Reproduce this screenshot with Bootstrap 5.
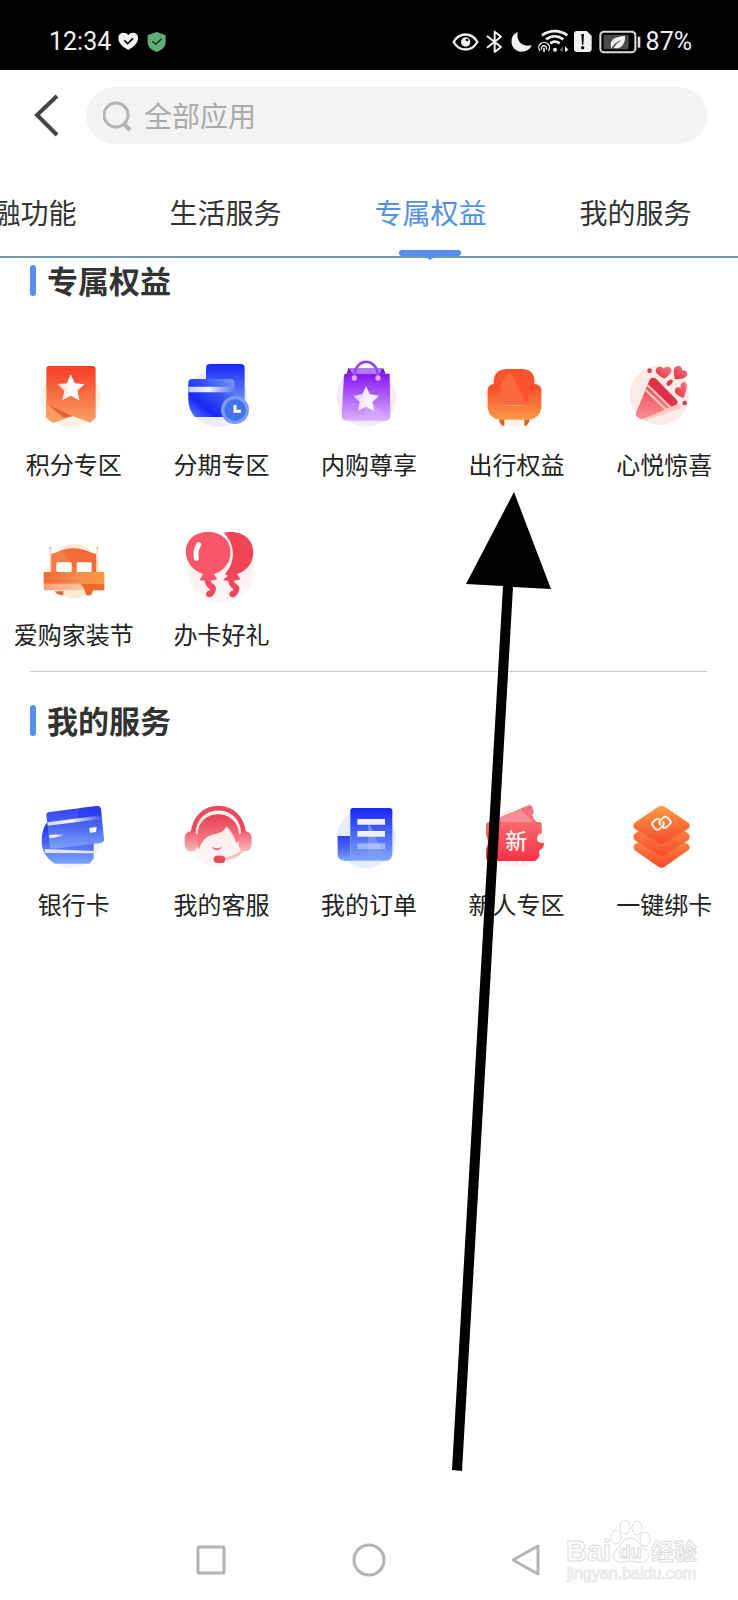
<!DOCTYPE html>
<html lang="zh-CN">
<head>
<meta charset="utf-8">
<meta name="viewport" content="width=device-width, initial-scale=1">
<title>全部应用</title>
<link href="https://cdn.jsdelivr.net/npm/bootstrap@5.3.0/dist/css/bootstrap.min.css" rel="stylesheet">
<style>
body{font-family:"Noto Sans CJK SC",sans-serif;color:#222;background:#fff}
.phone{min-height:100vh}
.status-bar{height:70px;background:#000;color:#f2f2f2;font:400 25px/28px Roboto,sans-serif;padding:28px 46px 0 49px}
.status-bar .signals{gap:2px}
.search-row{padding:17px 31px 0 30px}
.back-btn{width:56px;height:57px}
.search-pill{height:57px;background:#f3f3f3;padding-left:17px}
.search-pill input{font-size:28px;line-height:40px;margin-left:12px;padding:0 0 2px;color:#333}
.search-pill input::placeholder{color:#aaa;opacity:1}
.tab-strip{height:114px;border-bottom:2px solid #6d9bb5}
.tab-item{flex:0 0 205px;height:112px;padding-top:24px;font-size:28px;color:#333}
.tab-item.active{color:#5192e0}
.tab-item.active::before{content:"";position:absolute;bottom:0;left:50%;width:62px;height:6px;margin-left:-32px;border-radius:3px;background:#568fee}
.tab-item.active::after{content:"";position:absolute;top:100%;left:50%;margin-left:-7px;border:6px solid transparent;border-top:4px solid #568fee;border-bottom:0}
.section-title{font-size:31px;line-height:44px;font-weight:700;color:#333;padding-left:30px;margin-bottom:52px}
.section-title::before{content:"";width:6px;height:31px;border-radius:3px;background:#568fee;margin-right:11px}
.app-grid{display:grid;grid-template-columns:repeat(5,1fr);row-gap:42px}
.app-item{font-size:24px;line-height:36px;color:#222;gap:12px;white-space:nowrap}
.app-item svg{width:80px;height:80px}
.divider{height:1px;background:#ccc;margin:19px 31px 26px 30px}
.sys-nav{height:80px}
.sys-nav button{width:158px;height:80px}
.pointer{top:0;left:0;width:100%;pointer-events:none}
.watermark{right:36px;bottom:12px;width:140px;height:70px;pointer-events:none;font-family:"Liberation Sans","Noto Sans CJK SC",sans-serif}
</style>
</head>
<body>
<svg width="0" height="0" class="position-absolute" aria-hidden="true">
  <defs>
    <linearGradient id="gOrange" x2="0" y2="1"><stop stop-color="#f53c25"/><stop offset="1" stop-color="#fba065"/></linearGradient>
    <linearGradient id="gSofa" x2="0" y2="1"><stop stop-color="#f8482a"/><stop offset="1" stop-color="#fb9a48"/></linearGradient>
    <linearGradient id="gBlue" x2="0" y2="1"><stop stop-color="#1827f5"/><stop offset="1" stop-color="#7fa6f8"/></linearGradient>
    <linearGradient id="gCard" x2="0" y2="1"><stop stop-color="#3340ee"/><stop offset=".5" stop-color="#4a69f2"/><stop offset="1" stop-color="#7ea3f8"/></linearGradient>
    <linearGradient id="gBlue2" x1="1" x2="0" y2="1"><stop stop-color="#7a9af8"/><stop offset=".4" stop-color="#3550f3"/><stop offset=".7" stop-color="#1626f4"/><stop offset="1" stop-color="#5d86f6"/></linearGradient>
    <linearGradient id="gPurple" x2="0" y2="1"><stop stop-color="#8516f3"/><stop offset="1" stop-color="#d9b0fb"/></linearGradient>
    <linearGradient id="gRed" x2="0" y2="1"><stop stop-color="#e93d55"/><stop offset="1" stop-color="#fa8f92"/></linearGradient>
    <linearGradient id="gPad" x2="0" y2="1"><stop stop-color="#f25e6e"/><stop offset="1" stop-color="#fcb9bb"/></linearGradient>
    <linearGradient id="gTicket" x2="0" y2="1"><stop stop-color="#f56c6f"/><stop offset="1" stop-color="#fb3046"/></linearGradient>
    <linearGradient id="gHeart" x1="1" x2="0" y2="1"><stop stop-color="#f77a86"/><stop offset="1" stop-color="#de2f46"/></linearGradient>
    <linearGradient id="gStripe"><stop stop-color="#fff" stop-opacity=".75"/><stop offset=".45" stop-color="#fff" stop-opacity=".95"/><stop offset="1" stop-color="#fff" stop-opacity="0"/></linearGradient>
    <linearGradient id="gStar"><stop stop-color="#fff" stop-opacity=".7"/><stop offset=".5" stop-color="#fff"/></linearGradient>
    <linearGradient id="gBed"><stop stop-color="#ee6a35"/><stop offset=".55" stop-color="#f58b4e"/><stop offset="1" stop-color="#fb9a3a"/></linearGradient>
    <linearGradient id="gBedLow"><stop stop-color="#fa9d72"/><stop offset="1" stop-color="#fde0d2"/></linearGradient>
    <linearGradient id="gLayer" x2="0" y2="1"><stop stop-color="#fc9a45"/><stop offset="1" stop-color="#f74a2c"/></linearGradient>
    <linearGradient id="gFade" x2="0" y2="1"><stop stop-color="#fff" stop-opacity=".35"/><stop offset="1" stop-color="#fff" stop-opacity="0"/></linearGradient>
    <linearGradient id="gGlow" x2="0" y2="1"><stop stop-color="#fdeae8"/><stop offset="1" stop-color="#fff6f4"/></linearGradient>
  </defs>
</svg>

<div class="phone position-relative d-flex flex-column overflow-hidden">
  <div class="status-bar d-flex justify-content-between">
    <div class="d-flex">
      <span>12:34</span>
      <svg class="ms-1" width="50" height="28" viewBox="346 84 150 84" overflow="visible" aria-hidden="true">
        <path d="M386 150C365 139 356 127 356 114C356 98 377 93 386 106C395 93 415 98 415 114C415 127 406 139 386 150Z" fill="#f2f2f2"/>
        <path d="M374 121L384 131L400 115" fill="none" stroke="#000" stroke-width="5"/>
        <path d="M471 96L498 106V126C498 141 487 150 471 156C455 150 444 141 444 126V106Z" fill="#5fae78"/>
        <path d="M458 124L468 133L486 116" fill="none" stroke="#0b3016" stroke-width="4"/>
      </svg>
    </div>
    <div class="signals d-flex">
      <svg width="193" height="28" viewBox="243 84 579 84" fill="none" stroke="#f2f2f2" stroke-width="7" aria-hidden="true">
        <path d="M251 126C268 96 305 96 322 126C305 156 268 156 251 126Z"/>
        <circle cx="287" cy="126" r="14" fill="#f2f2f2" stroke="none"/><circle cx="291" cy="120" r="4" fill="#000" stroke="none"/>
        <path d="M351 108L393 141L374 156V95L393 110L351 143" stroke-width="6" stroke-linejoin="round"/>
        <path d="M443 96C415 105 419 155 455 155C471 155 481 147 485 136C458 143 438 124 443 96Z" fill="#f2f2f2" stroke="none"/>
        <path d="M516 106C538 89 570 89 592 106M528 118C544 106 564 106 580 118M541 130C550 123 560 123 569 130" stroke-width="8"/>
        <circle cx="555" cy="149" r="6" fill="#f2f2f2" stroke="none"/>
        <g stroke="#000" stroke-width="10"><path d="M510 153A15 15 0 1 1 534 153"/></g>
        <path d="M510 153A16 16 0 1 1 535 153M515 149A8 8 0 1 1 529 149" stroke-width="4"/><path d="M522 143V156" stroke-width="5"/>
        <path d="M579 140V156L569 149Z" fill="#666" stroke="none"/><path d="M585 138L595 149L585 156Z" fill="#f2f2f2" stroke="none"/>
        <path d="M620 93H650L665 107V147Q665 156 656 156H621Q612 156 612 147V102Q612 93 620 93Z" fill="#f2f2f2" stroke="none"/>
        <path d="M634 102H642L640 134H636Z" fill="#000" stroke="none"/><circle cx="638" cy="143" r="5" fill="#000" stroke="none"/>
        <rect x="691" y="95" width="105" height="62" rx="11" stroke="#ddd" stroke-width="6"/>
        <rect x="701" y="104" width="75" height="44" rx="4" fill="#4a4a4a" stroke="none"/>
        <path d="M724 146C716 118 735 110 765 108C767 136 748 150 731 143Q740 130 754 120Q733 128 724 146Z" fill="#f2f2f2" stroke="none"/>
        <path d="M807 110V143" stroke-width="8" stroke="#ddd"/>
      </svg>
      <span>87%</span>
    </div>
  </div>

  <header>
    <form class="search-row d-flex" role="search">
      <button type="button" class="back-btn btn border-0 p-0 text-start" aria-label="返回">
        <svg class="d-block" width="32" height="57" viewBox="0 0 32 57" fill="none" stroke="#444" stroke-width="4"><path d="M27 9L7 28L27 48"/></svg>
      </button>
      <label class="search-pill rounded-pill d-flex align-items-center flex-grow-1">
        <svg class="flex-shrink-0" width="29" height="32" viewBox="0 0 29 32" fill="none" stroke="#b4b4b4" stroke-width="3"><circle cx="13" cy="15" r="12"/><path d="M20 23L27 30" stroke-width="4"/></svg>
        <input type="search" class="form-control border-0 bg-transparent shadow-none" placeholder="全部应用" aria-label="全部应用">
      </label>
    </form>
    <nav class="tab-strip d-flex justify-content-end" aria-label="分类">
      <a href="#" class="tab-item d-flex align-items-center justify-content-center text-decoration-none">金融功能</a>
      <a href="#" class="tab-item d-flex align-items-center justify-content-center text-decoration-none">生活服务</a>
      <a href="#benefits" class="tab-item active position-relative d-flex align-items-center justify-content-center text-decoration-none" aria-current="true">专属权益</a>
      <a href="#services" class="tab-item d-flex align-items-center justify-content-center text-decoration-none">我的服务</a>
    </nav>
  </header>

  <main>
    <section id="benefits">
      <h2 class="section-title d-flex align-items-center mt-0">专属权益</h2>
      <div class="app-grid">
        <a href="#" class="app-item d-flex flex-column align-items-center text-decoration-none">
          <svg viewBox="101 42 240 240" aria-hidden="true">
            <circle cx="212" cy="173" r="89" fill="#fdf1e4"/>
            <path d="M148 78H276Q286 78 286 88V233L270 248L216 228L158 248L138 233V88Q138 78 148 78Z" fill="url(#gOrange)"/>
            <path d="M138 189L216 228L158 248L138 233Z" fill="#fb9c66"/><path d="M140 191L216 228L190 233Z" fill="#e7602f"/>
            <path d="M211 103L223 130L252 133L231 152L237 181L211 167L186 181L192 152L171 133L200 130Z" fill="url(#gStar)"/>
          </svg>积分专区</a>
        <a href="#" class="app-item d-flex flex-column align-items-center text-decoration-none">
          <svg viewBox="544 42 240 240" aria-hidden="true">
            <circle cx="655" cy="173" r="89" fill="#e9edfe"/>
            <path d="M631 72H723Q735 72 735 84V210H619V84Q619 72 631 72Z" fill="url(#gBlue)"/>
            <path d="M577 117H693Q705 117 705 129V231H585Q566 207 566 180V129Q566 117 577 117Z" fill="url(#gBlue2)"/>
            <path d="M567 140H703V157H567Z" fill="url(#gStripe)"/>
            <circle cx="706" cy="210" r="42" fill="#7b9cf6"/><circle cx="706" cy="210" r="32" fill="#4472ef"/>
            <path d="M706 195V214H724" fill="none" stroke="#fff" stroke-width="9"/>
          </svg>分期专区</a>
        <a href="#" class="app-item d-flex flex-column align-items-center text-decoration-none">
          <svg viewBox="87 42 240 240" aria-hidden="true">
            <circle cx="199" cy="171" r="89" fill="#f4e9fd"/>
            <path d="M146 84H249L257 101H140Z" fill="#b27af0"/><path d="M146 84L158 101H140ZM249 84L238 101H257Z" fill="#6d1fb8"/>
            <path d="M136 101H262L269 101L271 228Q270 242 256 242H140Q125 242 125 228L132 105Z" fill="url(#gPurple)"/>
            <path d="M195 170L271 236Q266 242 256 242H195Z" fill="url(#gFade)"/>
            <path d="M163 112C163 50 234 50 234 112" fill="none" stroke="#9b43e8" stroke-width="8"/>
            <circle cx="163" cy="114" r="8" fill="#e0a5f5"/><circle cx="234" cy="114" r="8" fill="#e0a5f5"/>
            <path d="M198 139L210 163L237 167L217 186L222 212L198 200L174 212L179 186L160 167L187 163Z" fill="url(#gStar)" opacity=".9"/>
          </svg>内购尊享</a>
        <a href="#" class="app-item d-flex flex-column align-items-center text-decoration-none">
          <svg viewBox="530 42 240 240" aria-hidden="true">
            <circle cx="642" cy="172" r="88" fill="#fef5ec"/>
            <path d="M596 236H612V258Q598 256 596 236ZM672 236H688Q686 256 672 258Z" fill="#d9602c"/>
            <path d="M617 87H668Q702 90 702 122V195H580V122Q582 90 617 87Z" fill="#f9542d"/>
            <path d="M628 92L586 155V195H680Z" fill="#fb7a4b" opacity=".55"/><path d="M630 92L684 180V110Q680 89 665 87H635Z" fill="#f7502b" opacity=".5"/>
            <path d="M562 150C562 127 603 127 603 150V182Q603 196 616 196H668Q682 196 682 182V150C682 127 723 127 723 150V203Q718 237 685 239H600Q566 237 562 203Z" fill="url(#gSofa)"/>
          </svg>出行权益</a>
        <a href="#" class="app-item d-flex flex-column align-items-center text-decoration-none">
          <svg viewBox="973 42 240 240" aria-hidden="true">
            <circle cx="1079" cy="166" r="89" fill="#fdebe6"/>
            <path d="M1050 119Q1058 109 1069 117L1131 180Q1138 189 1128 198L1028 238Q1006 234 1009 218Z" fill="url(#gRed)"/>
            <path d="M1052 119Q1060 109 1069 117L1131 180Q1136 189 1127 197L1114 199L1045 133Z" fill="#e1304a"/>
            <path d="M1044 136L1117 206M1038 150L1104 213" stroke="#fcc6c2" stroke-width="6"/>
            <path d="M1138 190L1143 205L1028 245L1040 234Z" fill="#fcc9c5"/>
            <g fill="url(#gHeart)"><path d="M1095 116C1070 104 1063 93 1071 84C1080 76 1089 82 1092 86C1097 79 1111 77 1115 88C1118 98 1106 108 1095 116Z"/><path d="M1126 117C1120 94 1120 81 1134 78C1144 77 1148 84 1147 90C1155 90 1164 94 1163 103C1161 115 1142 119 1126 117Z"/><path d="M1151 174C1131 166 1121 157 1127 147C1132 140 1139 141 1143 144C1141 133 1147 125 1155 126C1166 131 1161 157 1151 174Z"/></g>
            <g fill="#dc3c50"><circle cx="1050" cy="92" r="7"/><circle cx="1155" cy="189" r="7"/><ellipse cx="1110" cy="128" rx="7" ry="11" transform="rotate(45 1110 128)"/></g>
          </svg>心悦惊喜</a>
        <a href="#" class="app-item d-flex flex-column align-items-center text-decoration-none">
          <svg viewBox="101 42 240 240" aria-hidden="true">
            <ellipse cx="220" cy="184" rx="76" ry="82" fill="#fcecd6"/>
            <path d="M153 132Q171 128 180 122Q220 108 260 122Q270 128 288 132V186H153Z" fill="#f06d3a"/><path d="M150 117V184M291 117V184" stroke="#f7d6c0" stroke-width="4"/><circle cx="150" cy="113" r="3" fill="#cfa08c"/><circle cx="291" cy="113" r="3" fill="#cfa08c"/>
            <path d="M153 132Q171 128 186 122L230 186H153Z" fill="#f58a55" opacity=".6"/>
            <rect x="168" y="157" width="46" height="29" rx="4" fill="#fff"/><rect x="229" y="157" width="45" height="29" rx="4" fill="#fff"/>
            <path d="M163 244H189V256Q170 256 163 244ZM252 238H280L272 256H258Z" fill="#ea6432"/>
            <rect x="130" y="186" width="182" height="36" rx="4" fill="url(#gBed)"/><path d="M130 221H312V236Q312 241 307 241H135Q130 241 130 236Z" fill="url(#gBedLow)"/>
            <path d="M241 221H312V241H280L264 256Z" fill="#ee6829"/>
          </svg>爱购家装节</a>
        <a href="#" class="app-item d-flex flex-column align-items-center text-decoration-none">
          <svg viewBox="544 42 240 240" aria-hidden="true">
            <circle cx="664" cy="180" r="99" fill="url(#gGlow)"/>
            <path d="M694 206C691 236 720 222 707 246Q702 254 698 252" fill="none" stroke="#ef4a5b" stroke-width="18" stroke-linecap="round"/>
            <path d="M624 206C621 236 650 222 637 246Q632 254 628 252" fill="none" stroke="#f4485e" stroke-width="18" stroke-linecap="round"/>
            <path d="M672 68C780 50 785 172 712 192L722 208Q697 216 670 210L685 197L676 193C704 160 713 110 672 68Z" fill="#f04457"/>
            <path d="M625 66C710 66 714 172 642 192L653 208Q626 216 600 210L610 192C538 170 540 66 625 66Z" fill="#f9566a"/>
            <path d="M597 104Q586 122 590 145" fill="none" stroke="#fff" stroke-width="15" stroke-linecap="round"/>
          </svg>办卡好礼</a>
      </div>
    </section>
    <div class="divider"></div>
    <section id="services">
      <h2 class="section-title d-flex align-items-center mt-0">我的服务</h2>
      <div class="app-grid">
        <a href="#" class="app-item d-flex flex-column align-items-center text-decoration-none">
          <svg viewBox="101 42 240 240" aria-hidden="true">
            <circle cx="212" cy="176" r="88" fill="#f0f4fe"/>
            <path d="M139 129H268L280 190V236L267 251H163Q124 226 124 184Q124 150 139 129Z" fill="url(#gBlue)"/>
            <path d="M132 207L280 213V220L135 219Z" fill="#fff" opacity=".8"/>
            <path d="M148 96L289 78Q300 77 302 88L311 177Q311 187 302 189L160 206Q150 207 148 196L138 106Q138 97 148 96Z" fill="url(#gCard)"/>
            <path d="M238 84L289 78Q300 77 302 88L304 108L228 118Z" fill="#1f2ff2" opacity=".5"/>
            <path d="M141 127L303 106V117L142 137Z" fill="url(#gStripe)"/><path d="M146 165L192 162L188 169L147 175Z" fill="url(#gStripe)"/>
            <path d="M267 144L289 141L287 156L269 158Z" fill="#fff"/>
          </svg>银行卡</a>
        <a href="#" class="app-item d-flex flex-column align-items-center text-decoration-none">
          <svg viewBox="544 42 240 240" aria-hidden="true">
            <circle cx="655" cy="178" r="82" fill="url(#gGlow)"/>
            <path d="M588 177C586 78 724 78 722 177L710 190C706 173 694 154 681 139Q672 160 638 164Q610 170 598 208Q589 194 588 177Z" fill="url(#gRed)"/>
            <path d="M590 163C592 76 718 76 722 163" fill="none" stroke="#fdf1ed" stroke-width="8"/>
            <path d="M580 163C584 58 728 58 732 163" fill="none" stroke="#e94a5d" stroke-width="14"/>
            <path d="M730 205Q720 232 670 237" fill="none" stroke="#fac0c5" stroke-width="9"/>
            <rect x="555" y="154" width="39" height="60" rx="19" fill="url(#gPad)"/><rect x="717" y="154" width="39" height="60" rx="19" fill="url(#gPad)"/>
            <path d="M635 201Q652 208 668 201Q652 221 635 201Z" fill="#ef6874"/><rect x="642" y="227" width="35" height="22" rx="11" fill="#ea4a5c"/>
          </svg>我的客服</a>
        <a href="#" class="app-item d-flex flex-column align-items-center text-decoration-none">
          <svg viewBox="87 42 240 240" aria-hidden="true">
            <circle cx="199" cy="175" r="89" fill="#e5edfe"/>
            <path d="M113 168H151V242H132Q113 239 113 222Z" fill="url(#gCard)"/>
            <path d="M159 84H269Q277 84 277 92V222Q275 242 258 242H132Q150 237 151 220V92Q151 84 159 84Z" fill="url(#gBlue)"/>
            <path d="M172 117H255V134H172ZM172 153H255V170H172Z" fill="#edf1ff"/><path d="M172 190H255V207H172Z" fill="#fff" opacity=".4"/>
            <path d="M205 125L260 242H205Z" fill="url(#gFade)"/>
          </svg>我的订单</a>
        <a href="#" class="app-item d-flex flex-column align-items-center text-decoration-none">
          <svg viewBox="530 42 240 240" aria-hidden="true">
            <circle cx="644" cy="175" r="88" fill="#fff6f4"/>
            <path d="M565 126L684 76Q693 73 697 83L701 98Q693 103 698 112L708 126Z" fill="#f66f7c"/><path d="M565 126L660 88L700 126Z" fill="#fa9a9f" opacity=".7"/>
            <path d="M565 126H716Q724 126 724 134V160Q709 163 710 178Q711 190 732 189L728 204Q711 212 718 225Q713 243 698 243H565Q557 241 557 230V205Q569 185 557 165V134Q558 126 565 126Z" fill="url(#gTicket)"/>
            <text x="615" y="207" font-size="66" font-weight="500" fill="#fff0ee">新</text>
          </svg>新人专区</a>
        <a href="#" class="app-item d-flex flex-column align-items-center text-decoration-none">
          <svg viewBox="973 42 240 240" aria-hidden="true">
            <g fill="url(#gLayer)">
              <path d="M1005 193L1076 160Q1085 155 1095 160L1166 193Q1174 202 1166 211L1095 260Q1085 266 1076 260L1005 211Q998 202 1005 193Z"/>
              <path d="M1005 161L1076 115Q1085 110 1095 115L1166 161Q1174 170 1166 180L1095 227Q1085 233 1076 227L1005 180Q998 170 1005 161Z" stroke="#fa8850"/>
              <path d="M1005 128L1076 81Q1085 75 1095 81L1166 128Q1174 137 1166 146L1095 190Q1085 196 1076 190L1005 146Q998 137 1005 128Z" stroke="#fb9150"/>
            </g>
            <g fill="none" stroke="#fff4e5" stroke-width="6" stroke-linecap="round" stroke-linejoin="round"><path d="M1078 118L1072 116L1060 126Q1055 132 1060 138L1067 147Q1073 152 1079 147L1090 138Q1095 132 1090 126"/><path d="M1092 143L1098 143L1110 133Q1116 127 1111 121L1104 113Q1098 108 1092 112L1081 122Q1077 128 1082 134"/></g>
          </svg>一键绑卡</a>
      </div>
    </section>
  </main>

  <footer class="sys-nav d-flex justify-content-center mt-auto">
    <button type="button" class="btn border-0 p-0" aria-label="最近任务"><svg width="34" height="34" viewBox="0 0 34 34" fill="none" stroke="#b3b3b3" stroke-width="3"><rect x="4" y="4" width="26" height="26" rx="1"/></svg></button>
    <button type="button" class="btn border-0 p-0" aria-label="主屏幕"><svg width="34" height="34" viewBox="0 0 34 34" fill="none" stroke="#b3b3b3" stroke-width="3"><circle cx="17" cy="17" r="15"/></svg></button>
    <button type="button" class="btn border-0 p-0" aria-label="后退"><svg width="34" height="34" viewBox="0 0 34 34" fill="none" stroke="#b3b3b3" stroke-width="3" stroke-linejoin="round"><path d="M28 3V31L3 17Z"/></svg></button>
  </footer>

  <svg class="watermark position-absolute" viewBox="562 1518 140 70" fill="#fff" stroke="#dcdcdc" stroke-width="1" aria-label="Baidu 经验">
    <text x="566" y="1561" font-size="29" font-weight="700">Bai</text>
    <ellipse cx="616" cy="1537" rx="5" ry="7"/><ellipse cx="625" cy="1527" rx="5" ry="7"/><ellipse cx="637" cy="1528" rx="5" ry="7"/><ellipse cx="645" cy="1539" rx="5" ry="7"/>
    <path d="M630 1538C637 1538 640 1546 646 1550C652 1556 648 1563 639 1562Q630 1560 622 1562C613 1563 611 1556 616 1550C621 1546 623 1538 630 1538Z"/>
    <text x="619" y="1558" font-size="19" font-weight="700">du</text>
    <text x="651" y="1560" font-size="23" font-weight="700">经验</text>
    <text x="567" y="1579" font-size="16" stroke="#e8e8e8">jingyan.baidu.com</text>
  </svg>
  <svg class="pointer position-absolute" viewBox="0 0 738 1600" aria-hidden="true"><path d="M514 492L551 589L513 587L462 1471L452 1470L503 586L466 584Z"/></svg>
</div>
<script src="https://cdn.jsdelivr.net/npm/bootstrap@5.3.0/dist/js/bootstrap.bundle.min.js"></script>
</body>
</html>
